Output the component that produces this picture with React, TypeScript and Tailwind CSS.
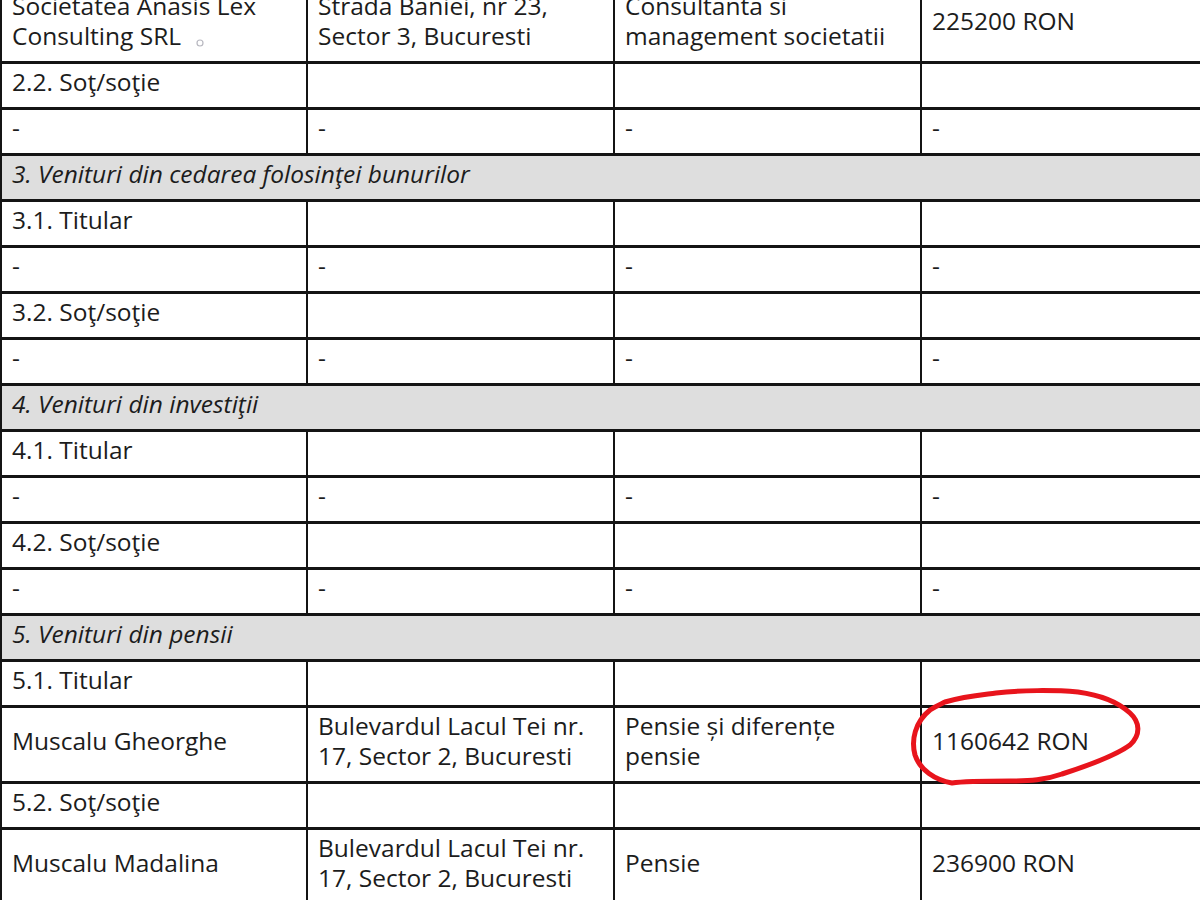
import React from "react";

type Row =
  | { kind: "section"; text: string }
  | { kind: "row"; tall?: boolean; cells: React.ReactNode[] };

const rows: Row[] = [
  {
    kind: "row",
    tall: true,
    cells: [
      <>Societatea Anasis Lex<br />Consulting SRL</>,
      <>Strada Baniei, nr 23,<br />Sector 3, Bucuresti</>,
      <>Consultanta si<br />management societatii</>,
      "225200 RON",
    ],
  },
  { kind: "row", cells: ["2.2. Soţ/soţie", "", "", ""] },
  { kind: "row", cells: ["-", "-", "-", "-"] },
  { kind: "section", text: "3. Venituri din cedarea folosinţei bunurilor" },
  { kind: "row", cells: ["3.1. Titular", "", "", ""] },
  { kind: "row", cells: ["-", "-", "-", "-"] },
  { kind: "row", cells: ["3.2. Soţ/soţie", "", "", ""] },
  { kind: "row", cells: ["-", "-", "-", "-"] },
  { kind: "section", text: "4. Venituri din investiţii" },
  { kind: "row", cells: ["4.1. Titular", "", "", ""] },
  { kind: "row", cells: ["-", "-", "-", "-"] },
  { kind: "row", cells: ["4.2. Soţ/soţie", "", "", ""] },
  { kind: "row", cells: ["-", "-", "-", "-"] },
  { kind: "section", text: "5. Venituri din pensii" },
  { kind: "row", cells: ["5.1. Titular", "", "", ""] },
  {
    kind: "row",
    tall: true,
    cells: [
      "Muscalu Gheorghe",
      <>Bulevardul Lacul Tei nr.<br />17, Sector 2, Bucuresti</>,
      <>Pensie și diferențe<br />pensie</>,
      "1160642 RON",
    ],
  },
  { kind: "row", cells: ["5.2. Soţ/soţie", "", "", ""] },
  {
    kind: "row",
    tall: true,
    cells: [
      "Muscalu Madalina",
      <>Bulevardul Lacul Tei nr.<br />17, Sector 2, Bucuresti</>,
      "Pensie",
      "236900 RON",
    ],
  },
];

export default function App() {
  return (
    <div
      className="relative w-[1200px] h-[900px] overflow-hidden bg-white text-[#1c1c1c]"
      style={{ fontFamily: '"Open Sans", "Noto Sans", sans-serif' }}
    >
      <div className="mt-[-12px] grid grid-cols-[304px_305px_305px_1fr] gap-x-[2px] gap-y-[3px] bg-[#141414] pl-[2px] pb-[3px]">
        {rows.map((r, i) =>
          r.kind === "section" ? (
            <div
              key={i}
              className="col-span-4 h-[43px] bg-[#dedede] pl-[10px] pb-[7px] flex items-center text-[24.5px] leading-[30px] italic"
            >
              {r.text}
            </div>
          ) : (
            r.cells.map((c, j) => (
              <div
                key={`${i}-${j}`}
                className={`${r.tall ? "h-[73px]" : "h-[43px]"} bg-white pl-[10px] pb-[7px] flex items-center text-[24.5px] leading-[30px] whitespace-nowrap`}
              >
                <div>{c}</div>
              </div>
            ))
          )
        )}
      </div>
      <svg
        className="absolute left-0 top-0 pointer-events-none"
        width="1200"
        height="900"
        viewBox="0 0 1200 900"
      >
        <circle cx="200" cy="43" r="3" fill="none" stroke="#b8b8c0" strokeWidth="1.2" />
        <path
          d="M945 702 C 965 696, 980 695, 996 693 C 1020 690, 1055 690, 1078 692 C 1100 695, 1118 702, 1130 713 C 1140 722, 1141 735, 1130 745 C 1115 756, 1090 765, 1062 774 C 1045 780, 1030 781, 1010 781 C 985 781, 965 781, 952 783 C 935 780, 920 770, 915 755 C 911 740, 915 722, 930 710 C 936 706, 941 704, 945 702 Z"
          fill="none"
          stroke="#e8141c"
          strokeWidth="5"
          strokeLinejoin="round"
        />
      </svg>
    </div>
  );
}
